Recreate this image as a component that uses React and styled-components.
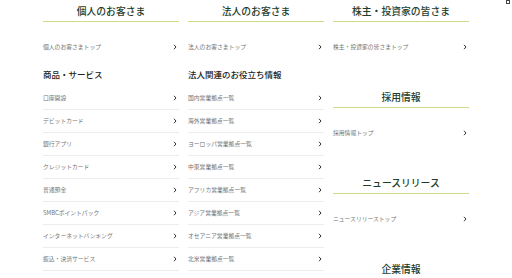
import React from "react";
import styled, { createGlobalStyle } from "styled-components";

const Global = createGlobalStyle`
  html, body { margin: 0; padding: 0; background: #fff; }
  body {
    font-family: "Noto Sans CJK JP", "Noto Sans", sans-serif;
    overflow: hidden;
  }
`;

const Page = styled.div`
  position: relative;
  width: 512px;
  height: 278px;
  overflow: hidden;
`;

const Grid = styled.div`
  width: 426px;
  margin: 0 auto;
  display: grid;
  grid-template-columns: repeat(3, 136px);
  column-gap: 9px;
  align-items: start;
`;

const Column = styled.div`
  display: flex;
  flex-direction: column;
`;

const Heading = styled.h2`
  margin: ${(p) => (p.$first ? "0" : "28px")} 0 0;
  padding: 4px 0 3px;
  line-height: 14px;
  font-size: 9.8px;
  font-weight: 500;
  color: #1f3d2d;
  text-align: center;
  border-bottom: 1px solid #c9dc86;
`;

const SubHeading = styled.h3`
  margin: 10px 0 7px;
  line-height: 12px;
  font-size: 8.5px;
  font-weight: 500;
  color: #222;
`;

const List = styled.ul`
  list-style: none;
  margin: 0;
  padding: 0;
`;

const Row = styled.li`
  display: flex;
  align-items: center;
  justify-content: space-between;
  height: 22px;
  margin-top: ${(p) => (p.$top ? "14px" : "0")};
  border-bottom: ${(p) => (p.$top ? "none" : "1px solid #ececec")};
`;

const Label = styled.span`
  font-size: 5.8px;
  line-height: 8px;
  color: #737373;
  white-space: nowrap;
`;

const ChevronBox = styled.svg`
  flex: none;
  width: 4px;
  height: 6px;
  margin-right: 2px;
`;

const Mark = styled.span`
  position: absolute;
  top: 0;
  right: 2px;
  width: 2px;
  height: 2px;
  border: 1px solid #444;
`;

const Chevron = () => (
  <ChevronBox viewBox="0 0 4 6">
    <polyline points="1,0.8 3,3 1,5.2" fill="none" stroke="#333" strokeWidth="1" />
  </ChevronBox>
);

const Item = ({ children, top }) => (
  <Row $top={top}>
    <Label>{children}</Label>
    <Chevron />
  </Row>
);

const products = [
  "口座開設",
  "デビットカード",
  "銀行アプリ",
  "クレジットカード",
  "普通預金",
  "SMBCポイントパック",
  "インターネットバンキング",
  "振込・決済サービス",
];

const corp = [
  "国内営業拠点一覧",
  "海外営業拠点一覧",
  "ヨーロッパ営業拠点一覧",
  "中東営業拠点一覧",
  "アフリカ営業拠点一覧",
  "アジア営業拠点一覧",
  "オセアニア営業拠点一覧",
  "北米営業拠点一覧",
];

export default function App() {
  return (
    <Page>
      <Global />
      <Mark />
      <Grid>
        <Column>
          <Heading $first>個人のお客さま</Heading>
          <List>
            <Item top>個人のお客さまトップ</Item>
          </List>
          <SubHeading>商品・サービス</SubHeading>
          <List>
            {products.map((t) => (
              <Item key={t}>{t}</Item>
            ))}
          </List>
        </Column>
        <Column>
          <Heading $first>法人のお客さま</Heading>
          <List>
            <Item top>法人のお客さまトップ</Item>
          </List>
          <SubHeading>法人関連のお役立ち情報</SubHeading>
          <List>
            {corp.map((t) => (
              <Item key={t}>{t}</Item>
            ))}
          </List>
        </Column>
        <Column>
          <Heading $first>株主・投資家の皆さま</Heading>
          <List>
            <Item top>株主・投資家の皆さまトップ</Item>
          </List>
          <Heading>採用情報</Heading>
          <List>
            <Item top>採用情報トップ</Item>
          </List>
          <Heading>ニュースリリース</Heading>
          <List>
            <Item top>ニュースリリーストップ</Item>
          </List>
          <Heading>企業情報</Heading>
        </Column>
      </Grid>
    </Page>
  );
}
